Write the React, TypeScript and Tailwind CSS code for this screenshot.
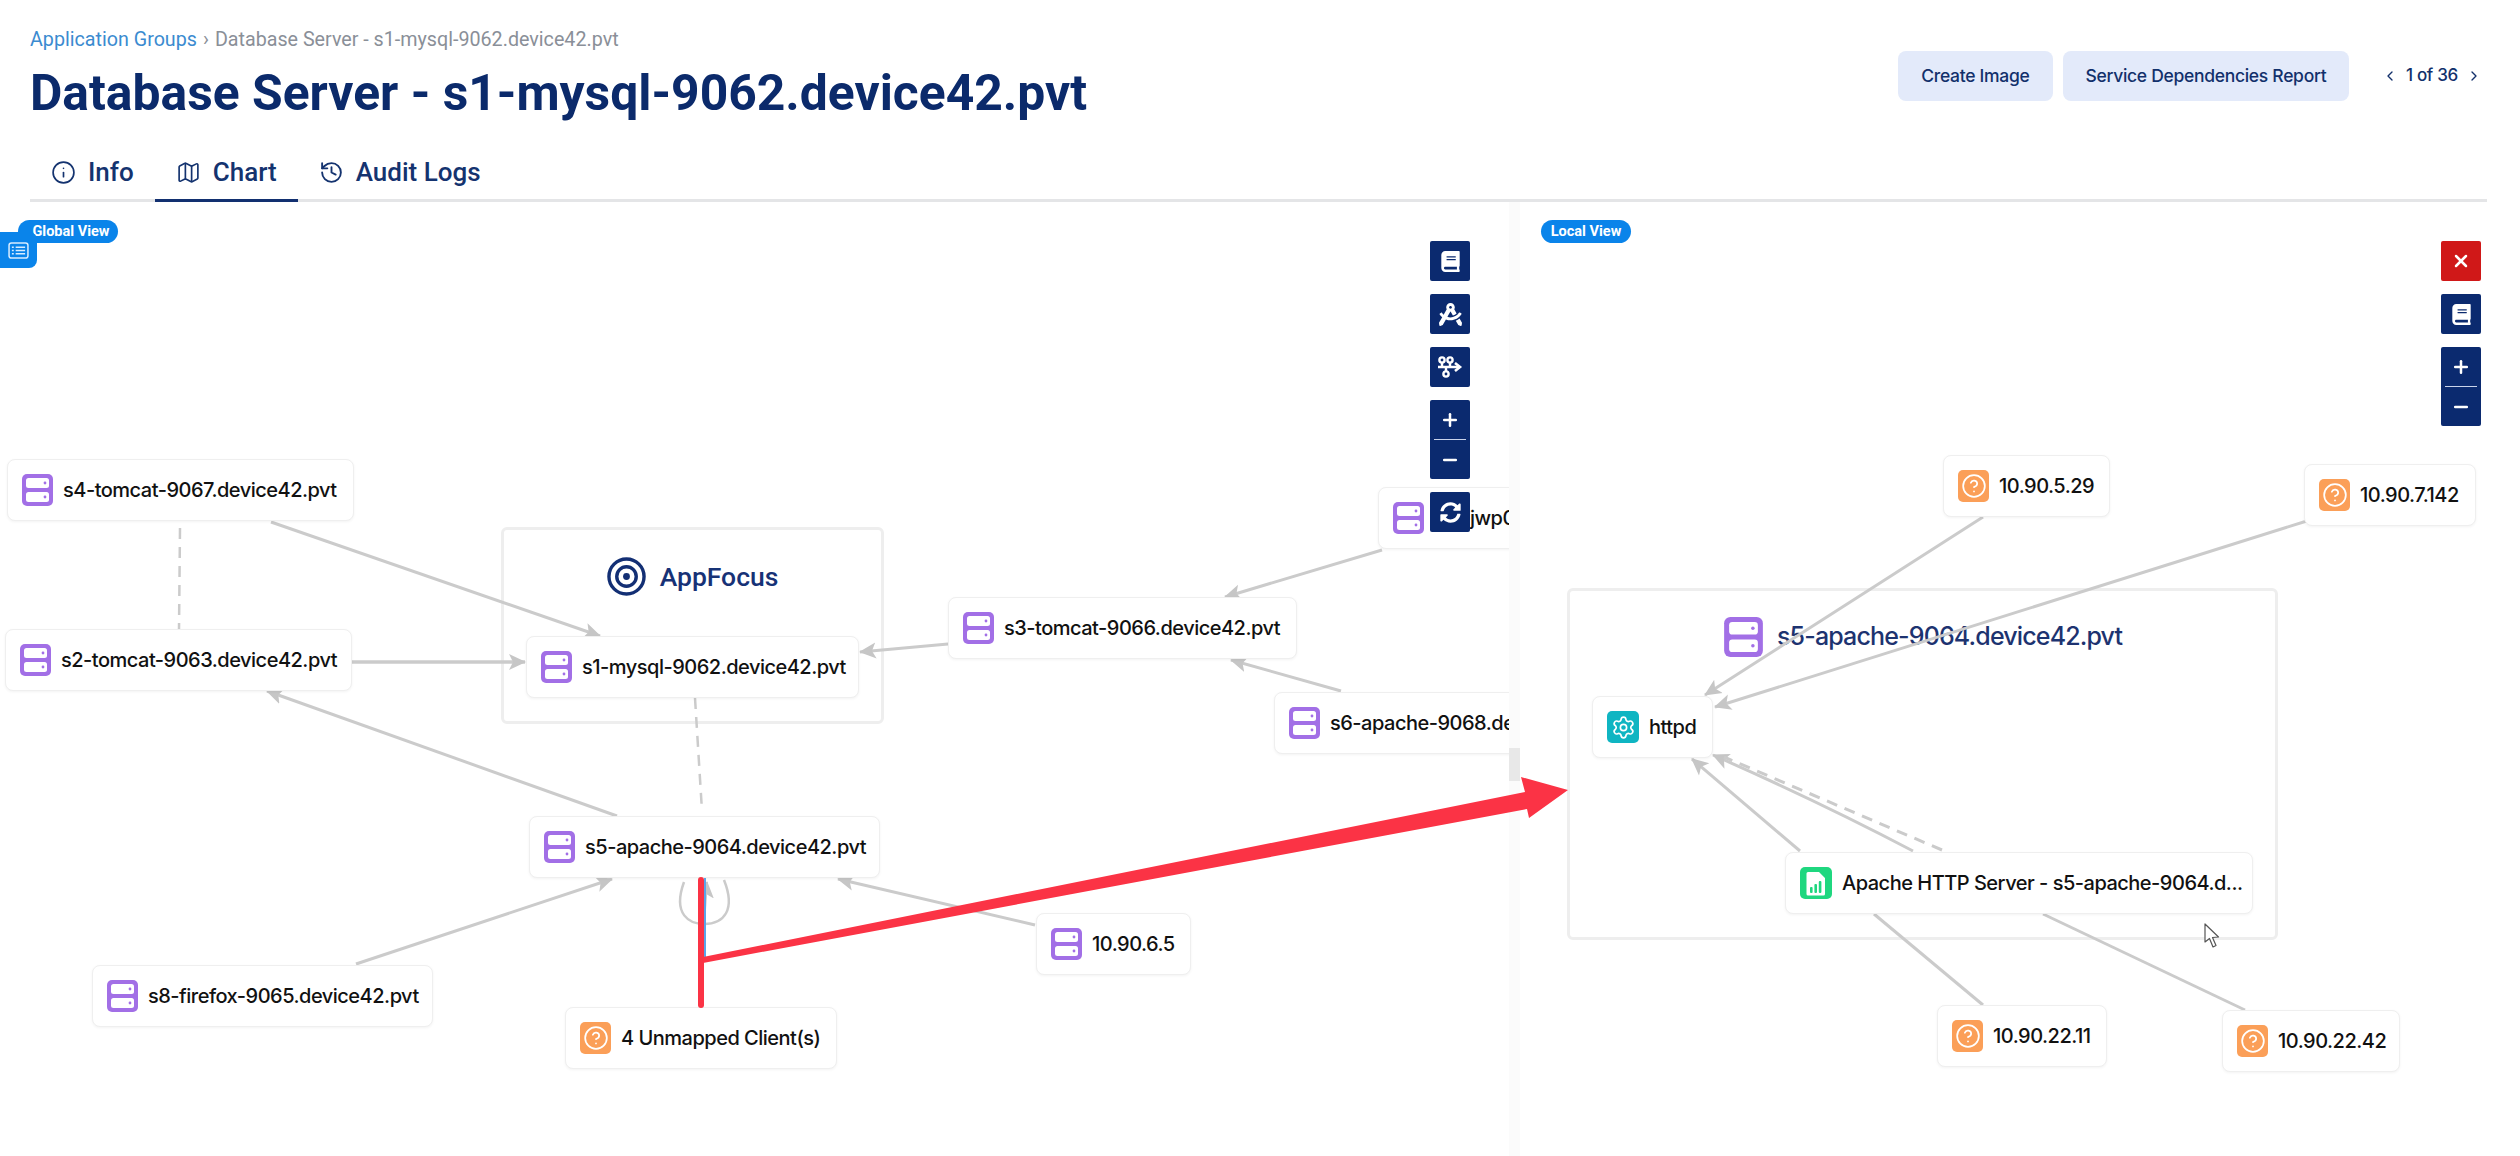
import React from "react";
import { Info, Map, History, ChevronLeft, ChevronRight, CircleHelp, Settings, Plus, Minus, X } from "lucide-react";
import { FaBook, FaDraftingCompass, FaSyncAlt } from "react-icons/fa";

type Kind = "server" | "unknown" | "service" | "app";
type N = { x: number; y: number; w: number; label: string; kind: Kind; shift?: number };

const leftNodes: N[] = [
  { x: 7, y: 459, w: 347, label: "s4-tomcat-9067.device42.pvt", kind: "server" },
  { x: 5, y: 629, w: 347, label: "s2-tomcat-9063.device42.pvt", kind: "server" },
  { x: 526, y: 636, w: 333, label: "s1-mysql-9062.device42.pvt", kind: "server" },
  { x: 948, y: 597, w: 349, label: "s3-tomcat-9066.device42.pvt", kind: "server" },
  { x: 1378, y: 487, w: 320, label: "s7-jwp01.device42.pvt", kind: "server", shift: 6 },
  { x: 1274, y: 692, w: 350, label: "s6-apache-9068.device42.pvt", kind: "server" },
  { x: 529, y: 816, w: 351, label: "s5-apache-9064.device42.pvt", kind: "server" },
  { x: 92, y: 965, w: 341, label: "s8-firefox-9065.device42.pvt", kind: "server" },
  { x: 1036, y: 913, w: 155, label: "10.90.6.5", kind: "server" },
  { x: 565, y: 1007, w: 272, label: "4 Unmapped Client(s)", kind: "unknown" },
];

const rightNodes: N[] = [
  { x: 1943, y: 455, w: 167, label: "10.90.5.29", kind: "unknown" },
  { x: 2304, y: 464, w: 172, label: "10.90.7.142", kind: "unknown" },
  { x: 1592, y: 696, w: 121, label: "httpd", kind: "service" },
  { x: 1785, y: 852, w: 468, label: "Apache HTTP Server - s5-apache-9064.d...", kind: "app" },
  { x: 1937, y: 1005, w: 170, label: "10.90.22.11", kind: "unknown" },
  { x: 2222, y: 1010, w: 178, label: "10.90.22.42", kind: "unknown" },
];

type E = { d: string; dashed?: boolean; arrow?: boolean; width?: number };

const leftEdges: E[] = [
  { d: "M271 522 L600 636", arrow: true },
  { d: "M352 662 L525 662", arrow: true, width: 3.5 },
  { d: "M180 528 L179 629", dashed: true, width: 2.5 },
  { d: "M617 816 L267 691", arrow: true },
  { d: "M695 698 L702 811", dashed: true, width: 2.5 },
  { d: "M948 644 L860 652", arrow: true },
  { d: "M1382 550 L1225 597", arrow: true },
  { d: "M1341 691 L1231 660", arrow: true },
  { d: "M356 964 L612 879", arrow: true },
  { d: "M1035 925 L838 879", arrow: true },
  { d: "M684 882 C 672 915, 690 924, 704 924 C 724 924, 736 910, 724 880", width: 2.5 },
  { d: "M704 924 L707 882", arrow: true, width: 2 },
];

const rightEdges: E[] = [
  { d: "M1983 517 L1705 695", arrow: true },
  { d: "M2310 520 L1715 707", arrow: true },
  { d: "M1800 851 L1692 759", arrow: true },
  { d: "M1913 851 Q 1820 802 1713 755", arrow: true },
  { d: "M1942 850 L1724 757", dashed: true },
  { d: "M1874 914 L1983 1005" },
  { d: "M2043 914 L2245 1010" },
];

function ServerIcon({ className }: { className: string }) {
  return (
    <svg viewBox="0 0 31 32" className={className}>
      <rect x="0" y="0" width="31" height="32" rx="5" fill="#a26fe6" />
      <rect x="4" y="4" width="23" height="10" rx="2.5" fill="#fff" />
      <rect x="4" y="18" width="23" height="10" rx="2.5" fill="#fff" />
      <circle cx="23" cy="9" r="1.4" fill="#a26fe6" />
      <circle cx="23" cy="23" r="1.4" fill="#a26fe6" />
    </svg>
  );
}

function AppIcon() {
  return (
    <svg viewBox="0 0 32 32" className="h-[32px] w-[32px] shrink-0">
      <rect width="32" height="32" rx="5" fill="#1fd77f" />
      <path d="M8 5 h11 l6 6 v16 a1.5 1.5 0 0 1 -1.5 1.5 h-15.5 a1.5 1.5 0 0 1 -1.5 -1.5 v-20.5 a1.5 1.5 0 0 1 1.5 -1.5z" fill="#fff" />
      <rect x="10" y="20" width="2.6" height="6" rx="1" fill="#1fd77f" />
      <rect x="14.4" y="17" width="2.6" height="9" rx="1" fill="#1fd77f" />
      <rect x="18.8" y="14" width="2.6" height="12" rx="1" fill="#1fd77f" />
    </svg>
  );
}

function NodeIcon({ kind }: { kind: Kind }) {
  if (kind === "server") return <ServerIcon className="h-[32px] w-[31px] shrink-0" />;
  if (kind === "app") return <AppIcon />;
  if (kind === "service")
    return (
      <div className="flex h-[32px] w-[32px] shrink-0 items-center justify-center rounded-[5px] bg-[#0fb5c2]">
        <Settings size={25} color="#fff" strokeWidth={1.6} />
      </div>
    );
  return (
    <div className="flex h-[32px] w-[31px] shrink-0 items-center justify-center rounded-[5px] bg-[#fb9f58]">
      <CircleHelp size={26} color="#fff" strokeWidth={1.6} />
    </div>
  );
}

function Node({ n, ox, oy }: { n: N; ox: number; oy: number }) {
  return (
    <div
      className="absolute flex h-[62px] items-center gap-[10px] whitespace-nowrap rounded-[8px] border border-[#efefef] bg-white pl-[14px] font-['Inter',sans-serif] text-[20px] font-medium tracking-[-0.5px] text-[#111] shadow-[0_1px_3px_rgba(0,0,0,0.05)]"
      style={{ left: n.x - ox, top: n.y - oy, width: n.w }}
    >
      <NodeIcon kind={n.kind} />
      <span style={{ marginLeft: n.shift ?? 0 }}>{n.label}</span>
    </div>
  );
}

function Edges({ edges, box, id }: { edges: E[]; box: string; id: string }) {
  return (
    <svg viewBox={box} className="absolute inset-0 h-full w-full">
      <defs>
        <marker id={id} markerUnits="userSpaceOnUse" markerWidth="20" markerHeight="20" refX="16" refY="9" orient="auto">
          <path d="M0 1 L17 9 L0 17 L4 9 Z" fill="#c6c6c6" />
        </marker>
      </defs>
      {edges.map((e, i) => (
        <path
          key={i}
          d={e.d}
          fill="none"
          stroke="#cbcbcb"
          strokeWidth={e.width ?? 3}
          strokeDasharray={e.dashed ? "11 8" : undefined}
          markerEnd={e.arrow ? `url(#${id})` : undefined}
        />
      ))}
    </svg>
  );
}

function ToolButton({ children, red }: { children: React.ReactNode; red?: boolean }) {
  return (
    <div className={`flex h-[40px] w-[40px] items-center justify-center rounded-[2px] text-white ${red ? "bg-[#d01818]" : "bg-[#0b2a6f]"}`}>
      {children}
    </div>
  );
}

function ZoomBox() {
  return (
    <div className="flex h-[79px] w-[40px] flex-col items-center rounded-[2px] bg-[#0b2a6f] text-white">
      <div className="flex h-[39px] items-center">
        <Plus size={20} strokeWidth={3} />
      </div>
      <div className="h-[1px] w-[32px] bg-[#c9d3ea]" />
      <div className="flex h-[39px] items-center">
        <Minus size={20} strokeWidth={3} />
      </div>
    </div>
  );
}

function FlowIcon() {
  return (
    <svg viewBox="0 0 26 22" className="h-[22px] w-[26px]" fill="none" stroke="#fff" strokeWidth="2.4">
      <circle cx="5" cy="4" r="2.6" />
      <circle cx="13" cy="4" r="2.6" />
      <circle cx="9" cy="18" r="2.6" />
      <path d="M1 11 H22 M5 7 V11 M13 7 V11 M9 11 V15" />
      <path d="M18 7 L23 11 L18 15" strokeWidth="2.6" />
    </svg>
  );
}

function Pill({ label, className }: { label: string; className: string }) {
  return (
    <div className={`absolute top-[18px] flex h-[23px] items-center justify-center rounded-full bg-[#0a84ea] font-['Roboto',sans-serif] text-[14.5px] font-bold text-white ${className}`}>
      {label}
    </div>
  );
}

export default function App() {
  return (
    <div className="flex h-[1156px] w-[2520px] flex-col overflow-hidden bg-white">
      <header className="flex h-[150px] items-start justify-between pl-[30px] pr-[38px]">
        <div className="flex flex-col pt-[29px]">
          <div className="flex h-[22px] items-center gap-[6px] font-['Roboto',sans-serif] text-[19.7px] text-[#8a8f98]">
            <span className="text-[#3b8bd0]">Application Groups</span>
            <span>›</span>
            <span>Database Server - s1-mysql-9062.device42.pvt</span>
          </div>
          <h1 className="mt-[14px] font-['Roboto',sans-serif] text-[49.8px] font-bold leading-[56px] text-[#0b2a6b]">
            Database Server - s1-mysql-9062.device42.pvt
          </h1>
        </div>
        <div className="flex items-center pt-[51px]">
          <button className="flex h-[50px] w-[155px] items-center justify-center rounded-[8px] bg-[#e3eafa] font-['Inter',sans-serif] text-[17.5px] font-medium tracking-[-0.3px] text-[#12306b]">
            Create Image
          </button>
          <button className="ml-[10px] flex h-[50px] w-[286px] items-center justify-center rounded-[8px] bg-[#e3eafa] font-['Inter',sans-serif] text-[17.5px] font-medium tracking-[-0.3px] text-[#12306b]">
            Service Dependencies Report
          </button>
          <div className="ml-[33px] flex items-center gap-[8px] font-['Inter',sans-serif] text-[17px] font-medium tracking-[-0.3px] text-[#12306b]">
            <ChevronLeft size={16} />
            <span>1 of 36</span>
            <ChevronRight size={16} />
          </div>
        </div>
      </header>

      <nav className="ml-[30px] flex h-[52px] w-[2457px] items-stretch border-b-[3px] border-[#e4e5e7] font-['Roboto',sans-serif] text-[26px] font-medium text-[#14336f]">
        <div className="mb-[-3px] flex items-center gap-[12px] px-[21px] pb-[7px]">
          <Info size={25} strokeWidth={1.6} />
          <span>Info</span>
        </div>
        <div className="mb-[-3px] flex items-center gap-[12px] border-b-[3px] border-[#123070] px-[21px] pb-[4px]">
          <Map size={25} strokeWidth={1.6} />
          <span>Chart</span>
        </div>
        <div className="mb-[-3px] flex items-center gap-[12px] px-[21px] pb-[7px]">
          <History size={25} strokeWidth={1.8} />
          <span>Audit Logs</span>
        </div>
      </nav>

      <main className="relative flex min-h-0 flex-1">
        <section className="relative w-[1509px] overflow-hidden">
          <div className="absolute left-[501px] top-[325px] flex h-[197px] w-[383px] justify-center rounded-[6px] border-[3px] border-[#eeeeee] pt-[27px]">
            <div className="flex items-center gap-[14px] self-start font-['Roboto',sans-serif] text-[26.5px] font-medium text-[#173276]">
              <svg viewBox="0 0 40 40" className="h-[39px] w-[39px]" fill="none" stroke="#132f74">
                <circle cx="20" cy="20" r="18" strokeWidth="3.5" />
                <circle cx="20" cy="20" r="10" strokeWidth="3.5" />
                <circle cx="20" cy="20" r="3.5" fill="#132f74" stroke="none" />
              </svg>
              <span>AppFocus</span>
            </div>
          </div>
          <Edges edges={leftEdges} box="0 202 1509 954" id="arrow-left" />
          {leftNodes.map((n) => (
            <Node key={n.label} n={n} ox={0} oy={202} />
          ))}
          <Pill label="Global View" className="left-[18px] w-[100px] pl-[6px]" />
          <div className="absolute left-0 top-[30px] flex h-[36px] w-[37px] items-center justify-center rounded-r-[8px] bg-[#0a84ea]">
            <svg viewBox="0 0 22 18" className="h-[17px] w-[21px]" fill="none" stroke="#d8ecff" strokeWidth="1.6">
              <rect x="1" y="1" width="20" height="16" rx="2.5" />
              <path d="M4 5.5 H6 M8 5.5 H18 M4 9 H6 M8 9 H18 M4 12.5 H6 M8 12.5 H18" />
            </svg>
          </div>
          <div className="absolute right-[39px] top-[39px] flex flex-col gap-[13px]">
            <ToolButton><FaBook size={21} /></ToolButton>
            <ToolButton><FaDraftingCompass size={23} /></ToolButton>
            <ToolButton><FlowIcon /></ToolButton>
            <ZoomBox />
            <ToolButton><FaSyncAlt size={21} /></ToolButton>
          </div>
        </section>

        <div className="relative w-[11px] bg-[#fbfbfb]">
          <div className="absolute left-0 top-[546px] h-[33px] w-[11px] bg-[#e8e8e8]" />
        </div>

        <section className="relative flex-1 overflow-hidden">
          <div className="absolute left-[47px] top-[386px] h-[352px] w-[711px] rounded-[6px] border-[3px] border-[#eeeeee] pl-[154px] pt-[26px]">
            <div className="flex items-center gap-[14px] font-['Inter',sans-serif] text-[25px] font-medium tracking-[-0.85px] text-[#1d3370]">
              <ServerIcon className="h-[40px] w-[39px]" />
              <span>s5-apache-9064.device42.pvt</span>
            </div>
          </div>
          <Edges edges={rightEdges} box="1520 202 1000 954" id="arrow-right" />
          {rightNodes.map((n) => (
            <Node key={n.label} n={n} ox={1520} oy={202} />
          ))}
          <Pill label="Local View" className="left-[21px] w-[90px]" />
          <div className="absolute right-[39px] top-[39px] flex flex-col gap-[13px]">
            <ToolButton red><X size={20} strokeWidth={3} /></ToolButton>
            <ToolButton><FaBook size={21} /></ToolButton>
            <ZoomBox />
          </div>
          <svg viewBox="0 0 16 25" className="absolute left-[684px] top-[721px] h-[25px] w-[16px]">
            <path d="M1 1 L1 19 L5.5 15.5 L9 24 L12 22.5 L8.5 14.5 L14.5 14 Z" fill="#fff" stroke="#555" strokeWidth="1.2" strokeLinejoin="round" />
          </svg>
        </section>

        <svg viewBox="0 202 2520 954" className="pointer-events-none absolute inset-0 h-full w-full">
          <path d="M705 878 V960" stroke="#5aa5e8" strokeWidth="2" />
          <path d="M701 880 V1005" stroke="#fb3345" strokeWidth="6" strokeLinecap="round" />
          <path d="M703 957 L1525 792 L1521 777 L1568 790 L1529 818 L1527 809 L703 963 Z" fill="#fb3345" />
        </svg>
      </main>
    </div>
  );
}
